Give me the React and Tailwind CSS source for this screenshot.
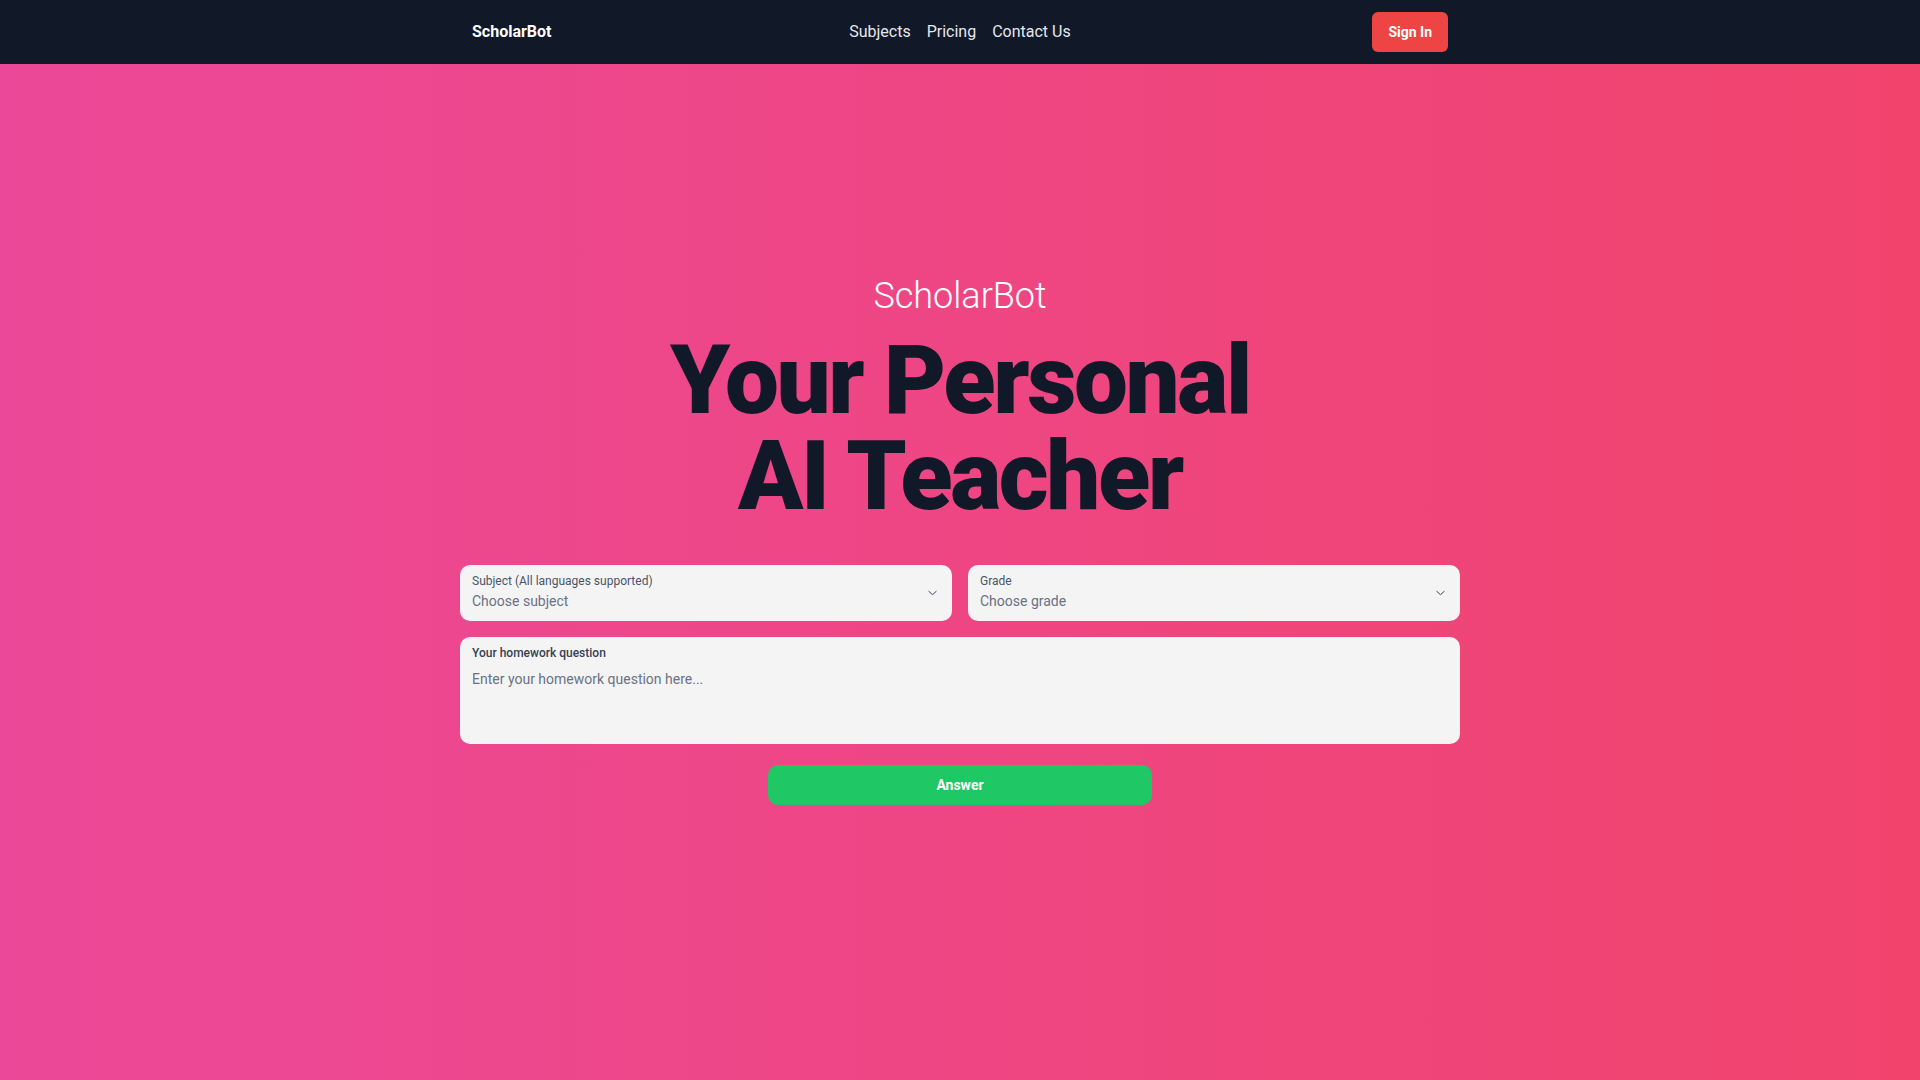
import { useState } from "react"

const subjects = ["Math", "Physics", "Chemistry", "Biology", "History", "English"]
const grades = ["Grade 1", "Grade 2", "Grade 3", "Grade 4", "Grade 5", "Grade 6", "Grade 7", "Grade 8"]

function Chevron() {
  return (
    <svg width="9" height="5" viewBox="0 0 9 5" fill="none" className="text-gray-700">
      <path d="M0.75 0.75l3.75 3.5 3.75-3.5" stroke="currentColor" strokeWidth="1" strokeLinecap="round" strokeLinejoin="round" />
    </svg>
  )
}

function SelectBox({ label, placeholder, options, value, onChange }) {
  return (
    <label className="relative flex h-14 flex-col rounded-[10px] bg-[#f4f4f5] px-3 pt-2">
      <span className="text-xs leading-4 text-gray-600">{label}</span>
      <select
        value={value}
        onChange={(e) => onChange(e.target.value)}
        className="mt-0.5 appearance-none bg-transparent text-sm leading-5 text-gray-500 outline-none"
      >
        <option value="">{placeholder}</option>
        {options.map((o) => (
          <option key={o} value={o}>
            {o}
          </option>
        ))}
      </select>
      <span className="pointer-events-none absolute right-[15px] top-1/2 -translate-y-1/2">
        <Chevron />
      </span>
    </label>
  )
}

export default function App() {
  const [subject, setSubject] = useState("")
  const [grade, setGrade] = useState("")
  const [question, setQuestion] = useState("")

  return (
    <div className="min-h-screen bg-gradient-to-r from-[#ec4899] to-[#f1436c] font-['Roboto',sans-serif]">
      <nav className="h-16 bg-[#111827]">
        <div className="mx-auto flex h-full max-w-5xl items-center justify-between px-6">
          <a href="#" className="text-base font-bold text-white">
            ScholarBot
          </a>
          <div className="-ml-1 flex items-center gap-4 text-base text-gray-200">
            <a href="#">Subjects</a>
            <a href="#">Pricing</a>
            <a href="#">Contact Us</a>
          </div>
          <button className="rounded-md bg-[#ef4444] px-4 py-2.5 text-sm leading-5 font-bold text-white">Sign In</button>
        </div>
      </nav>

      <main className="flex flex-col items-center pt-[212px] pb-20">
        <p className="text-4xl font-light text-white">ScholarBot</p>
        <h1 className="mt-4 text-center text-8xl leading-none font-black tracking-tight text-[#111827]">
          Your Personal
          <br />
          AI Teacher
        </h1>

        <form className="mt-[41px] flex w-[1000px] flex-col items-center" onSubmit={(e) => e.preventDefault()}>
          <div className="grid w-full grid-cols-2 gap-4">
            <SelectBox
              label="Subject (All languages supported)"
              placeholder="Choose subject"
              options={subjects}
              value={subject}
              onChange={setSubject}
            />
            <SelectBox label="Grade" placeholder="Choose grade" options={grades} value={grade} onChange={setGrade} />
          </div>

          <label className="mt-4 flex h-[107px] w-full flex-col rounded-[10px] bg-[#f4f4f5] px-3 pt-2">
            <span className="text-xs leading-4 font-medium text-gray-700">Your homework question</span>
            <textarea
              value={question}
              onChange={(e) => setQuestion(e.target.value)}
              placeholder="Enter your homework question here..."
              className="mt-2 flex-1 resize-none bg-transparent text-sm leading-5 text-gray-700 outline-none placeholder:text-gray-500"
            />
          </label>

          <button className="mt-[21px] h-10 w-96 rounded-[10px] bg-[#1fc864] text-sm font-bold text-white">Answer</button>
        </form>
      </main>
    </div>
  )
}
